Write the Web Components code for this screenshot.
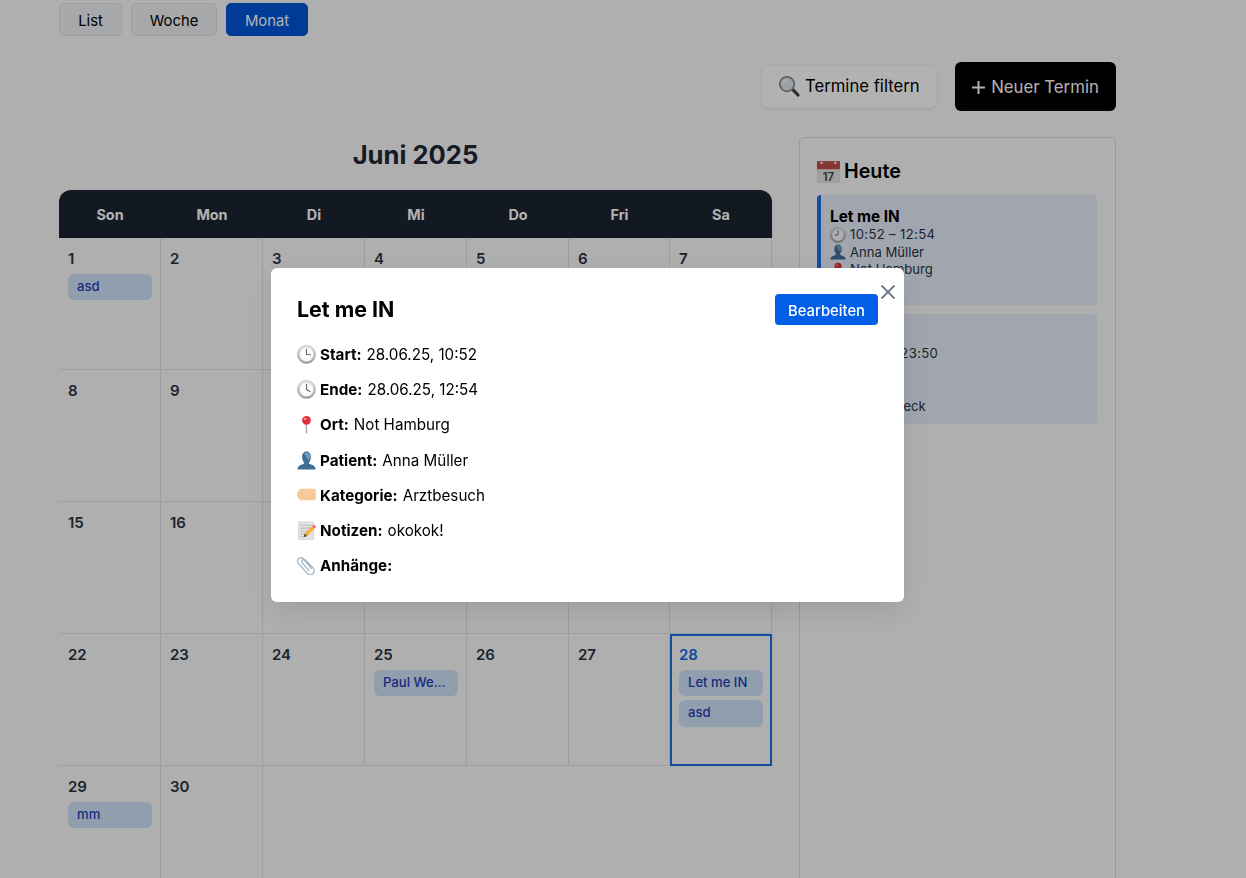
<!DOCTYPE html>
<html lang="de">
<head>
<meta charset="utf-8">
<title>Kalender</title>
<style>
  html, body { margin: 0; height: 100%; overflow: hidden; background: #fbfbfb; }
  body { font-family: Inter, "Liberation Sans", sans-serif; color: #000; }
</style>
</head>
<body>
<app-page>
  <view-tabs></view-tabs>
  <page-actions></page-actions>
  <div slot="main"><calendar-month></calendar-month></div>
  <today-panel slot="side">
    <today-card title="Let me IN" time="10:52 – 12:54" patient="Anna Müller" place="Not Hamburg"></today-card>
    <today-card title="asd" time="21:48 – 23:50" patient="Paul Wei" place="Lübeck" category="Augencheck"></today-card>
  </today-panel>
</app-page>

<appt-modal title="Let me IN">
  <detail-row icon="clock3" label="Start:">28.06.25, 10:52</detail-row>
  <detail-row icon="clock4" label="Ende:">28.06.25, 12:54</detail-row>
  <detail-row icon="pin" label="Ort:">Not Hamburg</detail-row>
  <detail-row icon="bust" label="Patient:">Anna Müller</detail-row>
  <detail-row icon="tag" label="Kategorie:">Arztbesuch</detail-row>
  <detail-row icon="memo" label="Notizen:">okokok!</detail-row>
  <detail-row icon="clip" label="Anhänge:"></detail-row>
</appt-modal>

<script>
const clockFace = (hx, hy) => `
  <defs><linearGradient id="cg" x1="0" y1="0" x2="0" y2="1"><stop offset="0" stop-color="#f4f4f6"/><stop offset="1" stop-color="#9a9ea5"/></linearGradient></defs>
  <circle cx="10" cy="10" r="9.5" fill="url(#cg)" stroke="#8f949b" stroke-width=".6"/>
  <circle cx="10" cy="10" r="7.4" fill="#fbfbfc" stroke="#b9bcc2" stroke-width=".5"/>
  <path d="M10 4.2V10L${hx} ${hy}" fill="none" stroke="#5c6067" stroke-width="1.1"/>`;

const ICONS = {
  clock3: clockFace(14.6, 10.2),
  clock4: clockFace(14, 12.4),
  clock9: clockFace(5.4, 10.2),
  pin: `
    <path d="M9.6 9.5L10.2 19.4" stroke="#9a9ea4" stroke-width="1.2"/>
    <circle cx="10" cy="5.6" r="4.6" fill="#e0323c"/>
    <circle cx="8.6" cy="4.2" r="1.2" fill="#f6a3a6"/>`,
  bust: `
    <path d="M.4 19.4c.2-3.200 2.300-4.400 5.600-5.400 1.400-.4 1.600-1.100 1.400-2C6 10.400 5.400 8.500 5.400 6 5.400 2.800 7.400.6 10 .6s4.600 2.200 4.600 5.400c0 2.500-.6 4.400-2 6-.2.900 0 1.600 1.400 2 3.300 1 5.400 2.200 5.600 5.400z" fill="#3f6f96"/>
    <path d="M7.500 2.200C9 1.300 12 1.400 13.400 3.300c.9 1.600.4 4.700-.9 6.500-1.500-1-3.900-5-5-7.600z" fill="#6f9cbd"/>`,
  tag: `
    <path d="M3.400 3H18c1 0 1.800.8 1.800 1.800v8.400c0 1-.8 1.800-1.800 1.800H3.400L.2 11.200V6.800z" fill="#f8c99b"/>
    <circle cx="3" cy="9" r="1" fill="#fff" stroke="#c9965f" stroke-width=".4"/>`,
  memo: `
    <rect x="1.500" y="1" width="16" height="18.500" fill="#e6e4e0" stroke="#bdbbb6" stroke-width=".5"/>
    <path d="M3.500 4.500h12M3.500 7.500h12M3.500 10.500h9M3.500 13.500h5M3.500 16.500h3" stroke="#9ea3ab" stroke-width=".7"/>
    <path d="M7 17l1-3.800L15.800 5.400l2.800 2.600-7.800 7.800z" fill="#f2b03c"/>
    <path d="M15.800 5.400l1-1c.5-.5 1.200-.5 1.700 0l.9.9c.5.500.5 1.200 0 1.700l-.8 1z" fill="#e8656b"/>
    <path d="M7 17l1-3.800 2.800 2.600z" fill="#5c5148"/>`,
  clip: `
    <path d="M15.600 13.600L7.400 3.700C6 1.900 3.300 1.400 1.800 2.700.2 4 .3 6.300 1.700 8l8.700 10c1.700 1.900 4.400 2.100 6.200.7 1.900-1.500 2-4 .5-5.900L9.300 4.700c-1-1.200-2.500-1.300-3.500-.5-1 .8-1 2.200-.1 3.300l7 8" fill="none" stroke="#9fb2c4" stroke-width="1.300"/>`,
  lens: `
    <path d="M12.800 12.600l5.400 5.600" stroke="#3c3f44" stroke-width="2.800" stroke-linecap="round"/>
    <circle cx="8.200" cy="8.200" r="6.600" fill="#dfe8ee" stroke="#8a8f96" stroke-width="1.600"/>
    <path d="M4.600 8c0-2 1.600-3.600 3.600-3.600" fill="none" stroke="#fff" stroke-width="1.200"/>`,
  cal: `
    <rect x="0" y="1" width="20" height="19" fill="#e4e4e4"/>
    <rect x="0" y="1" width="20" height="7" fill="#c2504a"/>
    <circle cx="4" cy="2.600" r="1" fill="#fff"/><circle cx="16" cy="2.600" r="1" fill="#fff"/>
    <text x="10" y="18" text-anchor="middle" font-family="Inter, sans-serif" font-size="10" fill="#444">17</text>`
};

let iconUid = 0;
class EmojiIcon extends HTMLElement {
  connectedCallback() {
    const size = this.getAttribute('size') || 19;
    const uid = 'cg' + (iconUid++);
    const body = ICONS[this.getAttribute('name')].replace(/id="cg"/, `id="${uid}"`).replace(/url\(#cg\)/, `url(#${uid})`);
    this.attachShadow({ mode: 'open' }).innerHTML = `
      <style>:host { display: inline-flex; flex: none; } svg { display: block; }</style>
      <svg width="${size}" height="${size}" viewBox="0 0 20 20">${body}</svg>`;
  }
}
customElements.define('emoji-icon', EmojiIcon);

class AppPage extends HTMLElement {
  constructor() {
    super();
    this.attachShadow({ mode: 'open' }).innerHTML = `
      <style>
        :host { display: block; box-sizing: border-box; height: 878px; overflow: hidden; padding: 3px 130px 0 59px; }
        .columns { display: grid; grid-template-columns: 713px 317px; column-gap: 27px; margin-top: 26px; }
      </style>
      <slot></slot>
      <div class="columns">
        <slot name="main"></slot>
        <slot name="side"></slot>
      </div>`;
  }
}
customElements.define('app-page', AppPage);

class ViewTabs extends HTMLElement {
  constructor() {
    super();
    this.attachShadow({ mode: 'open' }).innerHTML = `
      <style>
        :host { display: flex; gap: 9px; }
        button { font: 400 14.800px/20px Inter, sans-serif; height: 33px; box-sizing: border-box; padding: 2px 0 0; border: 1px solid #dfe2e6; border-radius: 5px; background: #f0f1f4; color: #000; }
        .on { background: #0055d8; border-color: #0055d8; color: #fff; }
      </style>
      <button style="width:63px">List</button><button style="width:86px">Woche</button><button class="on" style="width:82px">Monat</button>`;
  }
}
customElements.define('view-tabs', ViewTabs);

class PageActions extends HTMLElement {
  constructor() {
    super();
    this.attachShadow({ mode: 'open' }).innerHTML = `
      <style>
        :host { display: flex; justify-content: flex-end; align-items: center; gap: 18px; margin-top: 26px; }
        button { font-family: Inter, sans-serif; display: inline-flex; align-items: center; border-radius: 6px; box-sizing: border-box; }
        .filter { height: 43px; width: 176px; padding: 0 0 2px 16px; gap: 5px; font-size: 16.700px; border: 1px solid #f6f6f6; background: #fff; color: #000; box-shadow: 0 1px 3px rgba(0,0,0,.1); }
        .add { height: 49px; width: 161px; justify-content: center; font-size: 16.800px; background: #000; color: #fff; border: 0; gap: 6px; padding: 1px 0 0; }
        .plus { width: 13px; height: 13px; }
      </style>
      <button class="filter"><emoji-icon name="lens" size="22"></emoji-icon>Termine filtern</button>
      <button class="add"><svg class="plus" viewBox="0 0 13 13"><path d="M6.500 0v13M0 6.500h13" stroke="#fff" stroke-width="2"/></svg>Neuer Termin</button>`;
  }
}
customElements.define('page-actions', PageActions);

class EventChip extends HTMLElement {
  constructor() {
    super();
    this.attachShadow({ mode: 'open' }).innerHTML = `
      <style>
        :host { display: block; box-sizing: border-box; height: 26.300px; margin-top: 4.200px; padding: 0 9px; border-radius: 6px; background: #cfe2fa; color: #1f40b4; font: 500 13.100px/25px Inter, sans-serif; white-space: nowrap; overflow: hidden; text-overflow: ellipsis; }
      </style>
      <slot></slot>`;
  }
}
customElements.define('event-chip', EventChip);

class CalDay extends HTMLElement {
  constructor() {
    super();
    this.attachShadow({ mode: 'open' }).innerHTML = `
      <style>
        :host { display: block; box-sizing: border-box; height: 132px; min-width: 0; padding: 11px 8px 0 9px; border-right: 1px solid #dde3ec; border-bottom: 1px solid #dde3ec; }
        :host([today]) { outline: 2px solid #1a6fe8; outline-offset: -2px; border: 0; padding-right: 9px; }
        .num { font: 600 15px/20px Inter, sans-serif; color: #2a3342; margin: 0 0 5px; }
        :host([today]) .num { color: #1269e6; }
        ::slotted(event-chip:first-child) { margin-top: 0; }
      </style>
      <div class="num"></div>
      <slot></slot>`;
  }
  connectedCallback() {
    this.shadowRoot.querySelector('.num').textContent = this.getAttribute('day');
  }
}
customElements.define('cal-day', CalDay);

class CalendarMonth extends HTMLElement {
  constructor() {
    super();
    const events = { 1: ['asd'], 25: ['Paul Wehrmann'], 28: ['Let me IN', 'asd'], 29: ['mm'] };
    const names = ['Son', 'Mon', 'Di', 'Mi', 'Do', 'Fri', 'Sa'];
    let days = '';
    for (let d = 1; d <= 30; d++) {
      const chips = (events[d] || []).map(t => `<event-chip>${t}</event-chip>`).join('');
      days += `<cal-day day="${d}"${d === 28 ? ' today' : ''}>${chips}</cal-day>`;
    }
    this.attachShadow({ mode: 'open' }).innerHTML = `
      <style>
        :host { display: block; }
        h2 { font: 700 25.600px/36px Inter, sans-serif; color: #1f2937; text-align: center; margin: 0 0 17px; }
        .wrap { box-shadow: 0 4px 12px rgba(0,0,0,.03); border-radius: 12px 12px 0 0; }
        .head, .grid { display: grid; grid-template-columns: repeat(5, 102px) 101px 102px; }
        .head { height: 48px; align-items: center; background: #1a2533; border-radius: 12px 12px 0 0; color: #fff; font: 700 14.400px/21px Inter, sans-serif; text-align: center; }
      </style>
      <h2>Juni 2025</h2>
      <div class="wrap">
        <div class="head">${names.map(n => `<span>${n}</span>`).join('')}</div>
        <div class="grid">${days}</div>
      </div>`;
  }
}
customElements.define('calendar-month', CalendarMonth);

class TodayPanel extends HTMLElement {
  constructor() {
    super();
    this.attachShadow({ mode: 'open' }).innerHTML = `
      <style>
        :host { display: block; box-sizing: border-box; height: 760px; padding: 20px 18px 0 17px; border: 1px solid #d8dbe0; border-radius: 6px; }
        h3 { display: flex; align-items: center; gap: 4px; font: 600 19.700px/26px Inter, sans-serif; margin: 0 0 11px; color: #000; }
        .list { display: flex; flex-direction: column; gap: 9px; }
      </style>
      <h3><emoji-icon name="cal" size="23"></emoji-icon>Heute</h3>
      <div class="list"><slot></slot></div>`;
  }
}
customElements.define('today-panel', TodayPanel);

class TodayCard extends HTMLElement {
  connectedCallback() {
    const a = n => this.getAttribute(n);
    const line = (icon, text, cls = '') => `<div class="line ${cls}"><emoji-icon name="${icon}" size="16"></emoji-icon>${text}</div>`;
    this.attachShadow({ mode: 'open' }).innerHTML = `
      <style>
        :host { display: block; box-sizing: border-box; height: 110px; padding: 11.500px 9px 0; border-left: 4px solid #1a6fe8; border-radius: 4px; background: #e6edf9; }
        .t { font: 700 15.300px/19.500px Inter, sans-serif; color: #000; }
        .line { display: flex; align-items: center; gap: 4px; font: 400 13.100px/17.600px Inter, sans-serif; color: #2a3342; }
        .time { letter-spacing: .35px; }
        .cat { margin-left: 18px; }
      </style>
      <div class="t">${a('title')}</div>
      ${line('clock9', a('time'), 'time')}
      ${line('bust', a('patient'))}
      ${line('pin', a('place'))}
      ${a('category') ? `<div class="line cat">${a('category')}</div>` : ''}`;
  }
}
customElements.define('today-card', TodayCard);

class DetailRow extends HTMLElement {
  connectedCallback() {
    this.attachShadow({ mode: 'open' }).innerHTML = `
      <style>
        :host { display: flex; align-items: center; height: 21px; margin-top: 14.200px; font: 400 15.200px/21px Inter, sans-serif; color: #000; white-space: pre; }
        emoji-icon { margin-right: 4px; }
        b { font-weight: 700; margin-right: 5px; }
      </style>
      <emoji-icon name="${this.getAttribute('icon')}" size="19"></emoji-icon><b>${this.getAttribute('label')}</b><slot></slot>`;
  }
}
customElements.define('detail-row', DetailRow);

class ApptModal extends HTMLElement {
  connectedCallback() {
    this.attachShadow({ mode: 'open' }).innerHTML = `
      <style>
        :host { position: fixed; inset: 0; display: block; background: rgba(0,0,0,.3); }
        .box { position: absolute; left: 271px; top: 268px; width: 633px; height: 334px; box-sizing: border-box; padding: 26px 26px 0; background: #fff; border-radius: 6px; box-shadow: 0 10px 30px rgba(0,0,0,.1); }
        .top { display: flex; justify-content: space-between; align-items: center; height: 31px; margin-bottom: 19px; }
        h2 { margin: 0; font: 700 21.400px/31px Inter, sans-serif; color: #000; }
        .edit { height: 31px; width: 103px; border: 0; border-radius: 4px; background: #005ee8; color: #fff; font: 500 14.800px/20px Inter, sans-serif; padding: 2px 0 0; }
        .close { position: absolute; right: 9px; top: 17px; width: 14px; height: 14px; display: block; }
      </style>
      <div class="box">
        <svg class="close" viewBox="0 0 14 14"><path d="M.5.500l13 13M13.500.500l-13 13" stroke="#667080" stroke-width="1.800"/></svg>
        <div class="top"><h2>${this.getAttribute('title')}</h2><button class="edit">Bearbeiten</button></div>
        <slot></slot>
      </div>`;
  }
}
customElements.define('appt-modal', ApptModal);
</script>
</body>
</html>
